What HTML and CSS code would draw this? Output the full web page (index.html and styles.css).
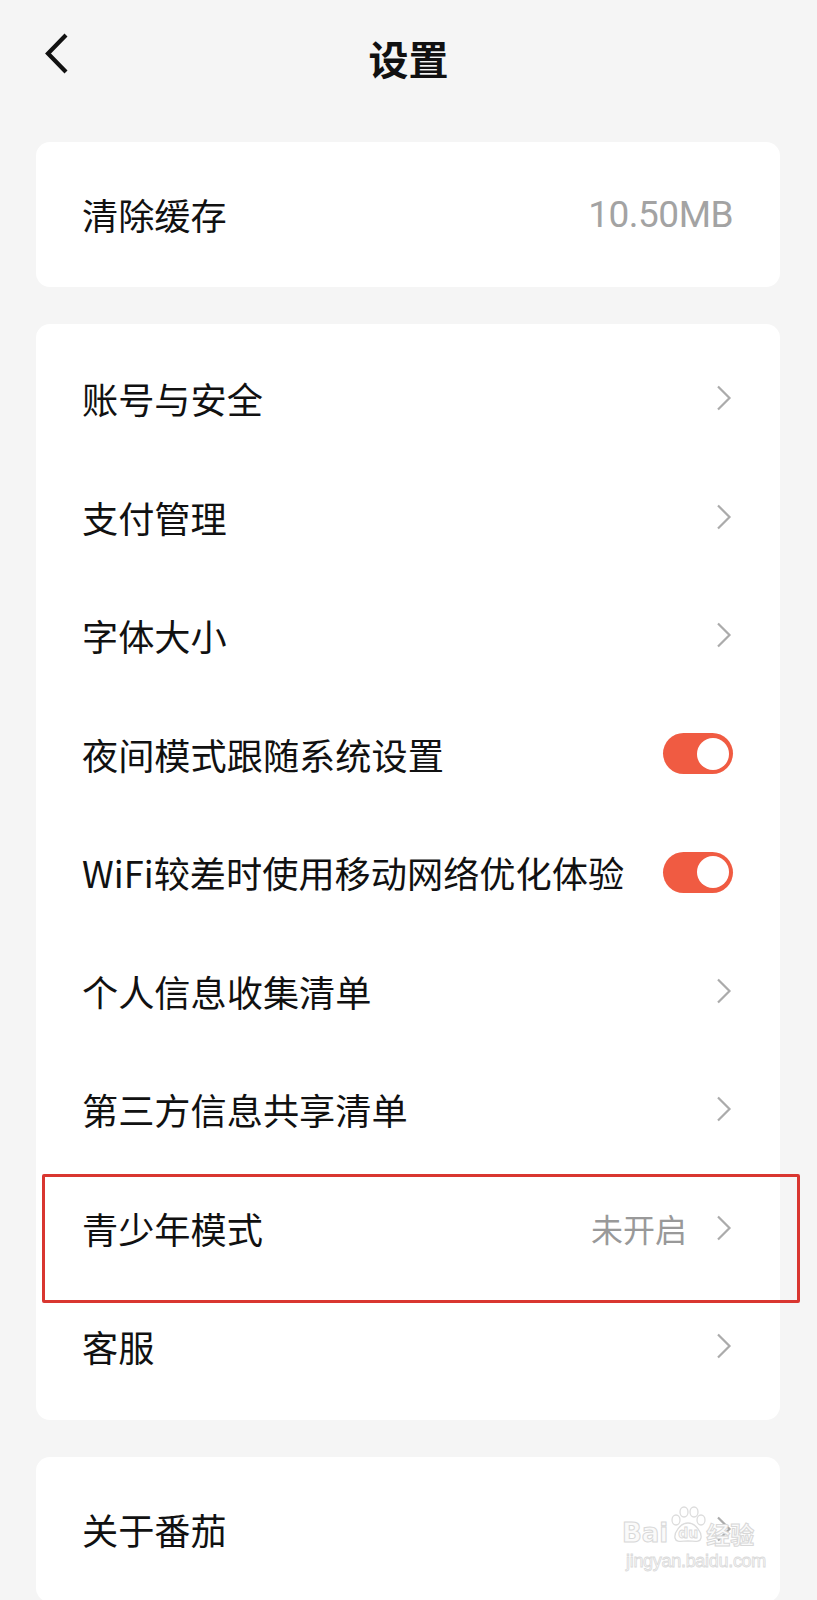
FILE: index.html
```html
<!DOCTYPE html>
<html lang="zh-CN">
<head>
<meta charset="utf-8">
<title>设置</title>
<link rel="stylesheet" href="styles.css">
</head>
<body>
<div class="page">
  <header class="topbar">
    <svg class="back" width="28" height="44" viewBox="0 0 28 44"><path d="M22 3 L4 21.5 L22 40" fill="none" stroke="#111" stroke-width="4.2" stroke-linecap="butt" stroke-linejoin="miter"/></svg>
    <h1 class="title">设置</h1>
  </header>

  <main class="content">
    <section class="card single">
      <div class="row">
        <span class="label">清除缓存</span>
        <span class="value num">10.50MB</span>
      </div>
    </section>

    <section class="card list">
      <div class="row"><span class="label">账号与安全</span><svg class="chev" width="16" height="26" viewBox="0 0 16 26"><path d="M2 1.5 L13.5 13 L2 24.5" fill="none" stroke="#ababab" stroke-width="2.2"/></svg></div>
      <div class="row"><span class="label">支付管理</span><svg class="chev" width="16" height="26" viewBox="0 0 16 26"><path d="M2 1.5 L13.5 13 L2 24.5" fill="none" stroke="#ababab" stroke-width="2.2"/></svg></div>
      <div class="row"><span class="label">字体大小</span><svg class="chev" width="16" height="26" viewBox="0 0 16 26"><path d="M2 1.5 L13.5 13 L2 24.5" fill="none" stroke="#ababab" stroke-width="2.2"/></svg></div>
      <div class="row"><span class="label">夜间模式跟随系统设置</span><span class="toggle on"><span class="knob"></span></span></div>
      <div class="row"><span class="label">WiFi较差时使用移动网络优化体验</span><span class="toggle on"><span class="knob"></span></span></div>
      <div class="row"><span class="label">个人信息收集清单</span><svg class="chev" width="16" height="26" viewBox="0 0 16 26"><path d="M2 1.5 L13.5 13 L2 24.5" fill="none" stroke="#ababab" stroke-width="2.2"/></svg></div>
      <div class="row"><span class="label">第三方信息共享清单</span><svg class="chev" width="16" height="26" viewBox="0 0 16 26"><path d="M2 1.5 L13.5 13 L2 24.5" fill="none" stroke="#ababab" stroke-width="2.2"/></svg></div>
      <div class="row highlighted"><span class="label">青少年模式</span><span class="right"><span class="value">未开启</span><svg class="chev" width="16" height="26" viewBox="0 0 16 26"><path d="M2 1.5 L13.5 13 L2 24.5" fill="none" stroke="#ababab" stroke-width="2.2"/></svg></span><span class="mark"></span></div>
      <div class="row"><span class="label">客服</span><svg class="chev" width="16" height="26" viewBox="0 0 16 26"><path d="M2 1.5 L13.5 13 L2 24.5" fill="none" stroke="#ababab" stroke-width="2.2"/></svg></div>
    </section>

    <section class="card single">
      <div class="row"><span class="label">关于番茄</span><svg class="chev" width="16" height="26" viewBox="0 0 16 26"><path d="M2 1.5 L13.5 13 L2 24.5" fill="none" stroke="#ababab" stroke-width="2.2"/></svg></div>
    </section>
  </main>

  <div class="watermark">
    <div class="wm-top">
      <span class="wm-text">Bai</span>
      <span class="wm-paw">
        <svg width="40" height="38" viewBox="0 0 40 38"><g fill="none" stroke="#dcdcdc" stroke-width="1.3"><ellipse cx="8" cy="14" rx="4" ry="5"/><ellipse cx="16" cy="6" rx="4" ry="5"/><ellipse cx="26" cy="6" rx="4" ry="5"/><ellipse cx="33" cy="14" rx="4" ry="5"/><path d="M20 17 C12 17 6 27 7 32 C8 37 14 35 20 35 C26 35 32 37 33 32 C34 27 28 17 20 17 Z"/></g></svg>
        <span class="wm-du">du</span>
      </span>
      <span class="wm-text cn">经验</span>
    </div>
    <div class="wm-url">jingyan.baidu.com</div>
  </div>
</div>
</body>
</html>
```

FILE: styles.css
```css
* { box-sizing: border-box; }
html, body { margin: 0; padding: 0; }
body {
  background: #f5f5f5;
  font-family: "Noto Sans CJK SC", "Noto Sans", sans-serif;
  color: #111;
}
.page {
  position: relative;
  width: 817px;
  min-height: 1600px;
  overflow: hidden;
}
.topbar {
  position: relative;
  height: 116px;
  display: flex;
  align-items: center;
  justify-content: center;
}
.back {
  position: absolute;
  left: 44px;
  top: 32px;
}
.title {
  margin: 0;
  font-size: 40px;
  font-weight: 700;
  line-height: 1;
  letter-spacing: 0;
  color: #111;
}
.content {
  padding: 26px 37px 0 36px;
  display: flex;
  flex-direction: column;
  gap: 37px;
}
.card {
  background: #fff;
  border-radius: 14px;
}
.card.single .row { height: 145px; }
.card.list { padding: 15px 0 14px; }
.card.list .row { height: 118.5px; }
.row {
  position: relative;
  display: flex;
  align-items: center;
  justify-content: space-between;
  padding: 0 47px 0 46px;
}
.label {
  font-size: 36.2px;
  line-height: 1;
  color: #111;
  white-space: nowrap;
}
.value {
  font-size: 32px;
  line-height: 1;
  color: #999;
}
.value.num {
  font-family: Roboto, "Noto Sans", sans-serif;
  font-size: 37px;
  color: #a3a3a3;
  letter-spacing: -0.5px;
}
.right {
  display: flex;
  align-items: center;
  gap: 29px;
}
.chev { display: block; margin-right: 1px; }
.toggle {
  width: 70px;
  height: 41px;
  border-radius: 21px;
  background: #f05b42;
  display: flex;
  align-items: center;
  justify-content: flex-end;
  padding-right: 4px;
}
.knob {
  width: 32px;
  height: 32px;
  border-radius: 50%;
  background: #fff;
}
.mark {
  position: absolute;
  left: 6px;
  top: 5px;
  width: 758px;
  height: 129px;
  border: 3px solid #d93630;
  border-radius: 2px;
  pointer-events: none;
}
.watermark {
  position: absolute;
  left: 622px;
  top: 1506px;
  display: flex;
  flex-direction: column;
  align-items: flex-start;
}
.wm-top {
  display: flex;
  align-items: flex-end;
}
.wm-text {
  font-family: "DejaVu Sans", sans-serif;
  font-size: 26px;
  font-weight: 700;
  line-height: 1;
  color: #fafafa;
  -webkit-text-stroke: 1px #d8d8d8;
}
.wm-text.cn {
  font-family: "Noto Sans CJK SC", sans-serif;
  font-size: 24px;
  margin-left: -2px;
}
.wm-paw {
  position: relative;
  width: 40px;
  height: 38px;
  margin-bottom: 2px;
}
.wm-paw svg { display: block; }
.wm-du {
  position: absolute;
  left: 10px;
  top: 19px;
  font-family: "DejaVu Sans", sans-serif;
  font-size: 14px;
  font-weight: 700;
  color: #fafafa;
  -webkit-text-stroke: 0.8px #d8d8d8;
}
.wm-url {
  margin-top: 6px;
  margin-left: 4px;
  font-family: "Liberation Sans Narrow", "Liberation Sans", sans-serif;
  font-size: 18px;
  line-height: 1;
  color: #fafafa;
  -webkit-text-stroke: 0.8px #dadada;
  letter-spacing: -0.3px;
}
```
